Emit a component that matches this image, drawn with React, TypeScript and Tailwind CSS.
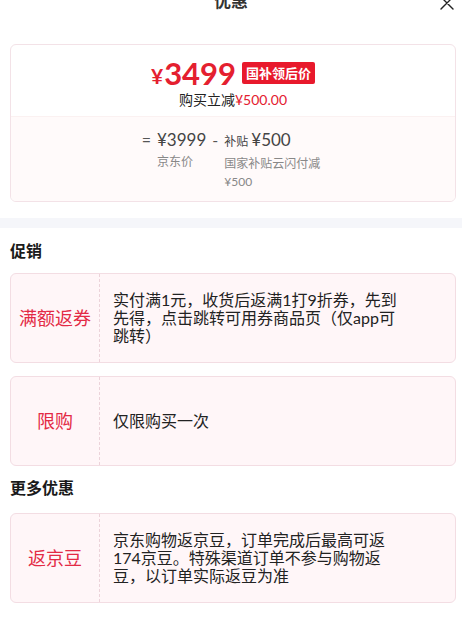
const PROMOS = [
  {
    label: "满额返券",
    text: "实付满1元，收货后返满1打9折券，先到先得，点击跳转可用券商品页（仅app可跳转）",
  },
  { label: "限购", text: "仅限购买一次" },
];

const MORE = [
  {
    label: "返京豆",
    text: "京东购物返京豆，订单完成后最高可返174京豆。特殊渠道订单不参与购物返豆，以订单实际返豆为准",
  },
];

export default function App() {
  return (
    <div className="h-[620px] w-[462px] overflow-hidden bg-white font-['Lato','Noto_Sans_CJK_SC',sans-serif] text-[#333]">
      <header className="relative -mt-[11px] flex h-[24px] items-center justify-center">
        <span className="text-[17px] font-bold leading-[24px] text-[#333]">优惠</span>
        <svg
          className="absolute right-[8px] top-[7px]"
          width="14"
          height="14"
          viewBox="0 0 14 14"
          fill="none"
          stroke="#222"
          strokeWidth="1.4"
          strokeLinecap="round"
        >
          <path d="M1 1L13 13M13 1L1 13" />
        </svg>
      </header>

      <div className="ml-[10px] mt-[31px] w-[446px] overflow-hidden rounded-[6px] border border-[#f3e2e7]">
        <div className="flex flex-col items-center pb-[6px] pt-[11px]">
          <div className="flex h-[34px] items-center">
            <span className="mt-[4px] text-[21px] font-bold leading-none text-[#e4202f]">¥</span>
            <span className="ml-[1px] text-[31px] font-bold leading-none text-[#e4202f]">3499</span>
            <span className="ml-[6px] rounded-[2px] bg-[#e8192c] px-[4px] text-[13px] font-bold leading-[22px] text-white">
              国补领后价
            </span>
          </div>
          <div className="text-[14px] leading-[20px] text-[#222]">
            购买立减<span className="text-[#e4202f]">¥500.00</span>
          </div>
        </div>

        <div className="flex justify-center border-t border-[#fbf1f1] bg-[#fffafa] pb-[10px] pt-[12px]">
          <span className="mr-[6px] text-[16px] leading-[22px] text-[#555]">=</span>
          <div className="flex flex-col">
            <span className="text-[17px] leading-[22px] text-[#444]">¥3999</span>
            <span className="mt-[2px] text-[12px] leading-[18px] text-[#888]">京东价</span>
          </div>
          <span className="mx-[6px] text-[16px] leading-[22px] text-[#555]">-</span>
          <div className="flex w-[100px] flex-col">
            <div className="flex items-baseline leading-[22px] text-[#444]">
              <span className="text-[12px]">补贴</span>
              <span className="ml-[3px] text-[17px]">¥500</span>
            </div>
            <span className="mt-[2px] text-[12px] leading-[18px] text-[#888]">国家补贴云闪付减¥500</span>
          </div>
        </div>
      </div>

      <div className="mt-[16px] h-[10px] bg-[#f5f6fa]" />

      <h2 className="ml-[10px] mt-[12px] text-[16px] font-bold leading-[22px] text-[#1a1a1a]">促销</h2>
      <div className="mt-[11px] flex flex-col gap-[13px]">
        {PROMOS.map((p) => (
          <PromoCard key={p.label} label={p.label} text={p.text} />
        ))}
      </div>

      <h2 className="ml-[10px] mt-[11px] text-[16px] font-bold leading-[22px] text-[#1a1a1a]">更多优惠</h2>
      <div className="mt-[14px] flex flex-col gap-[13px]">
        {MORE.map((p) => (
          <PromoCard key={p.label} label={p.label} text={p.text} />
        ))}
      </div>
    </div>
  );
}

function PromoCard({ label, text }: { label: string; text: string }) {
  return (
    <div className="ml-[10px] flex min-h-[90px] w-[446px] rounded-[6px] border border-[#f3dde3] bg-[#fff6f8]">
      <div className="flex w-[89px] shrink-0 items-center justify-center border-r border-dashed border-[#ecd3da] text-[18px] text-[#e32a45]">
        {label}
      </div>
      <div className="flex items-center pl-[13px]">
        <p className="w-[290px] text-[16px] leading-[18px] text-[#222]">{text}</p>
      </div>
    </div>
  );
}
